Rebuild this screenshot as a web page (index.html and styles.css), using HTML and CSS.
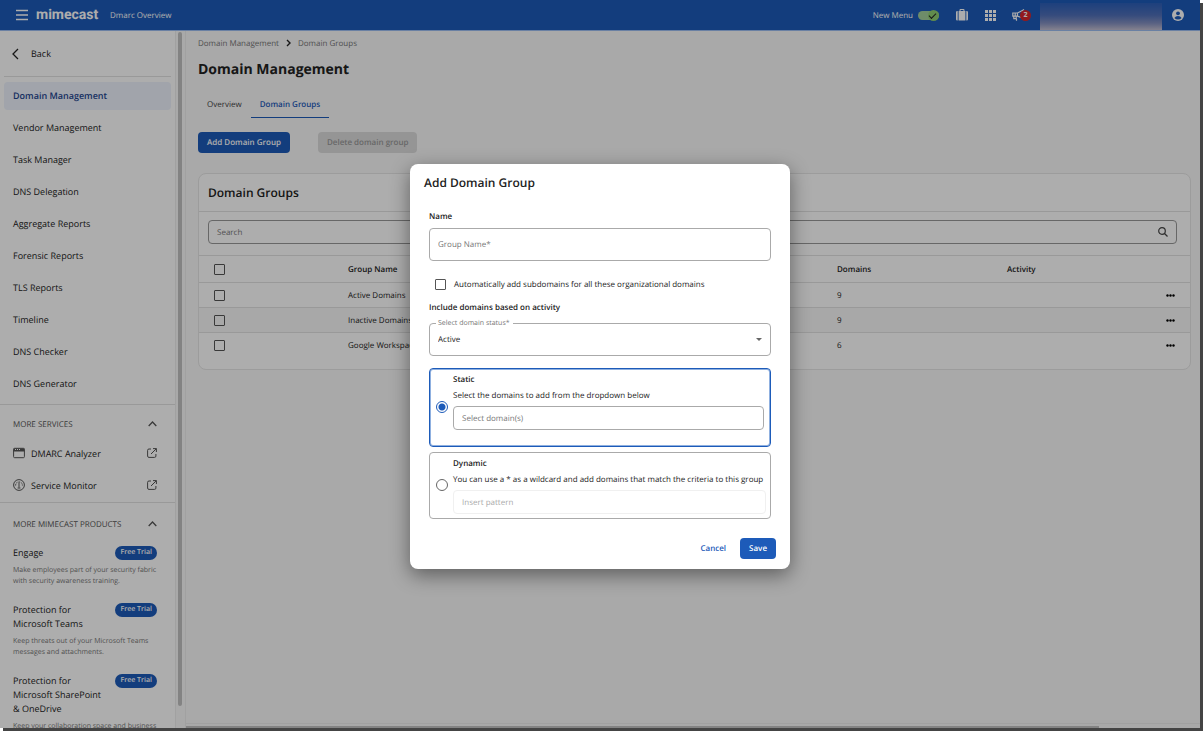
FILE: index.html
```html
<!DOCTYPE html>
<html lang="en">
<head>
    <meta charset="UTF-8">
    <meta name="viewport" content="width=device-width, initial-scale=1.0">
    <title>Domain Management - Dmarc Overview</title>
    <link rel="stylesheet" href="styles.css">
</head>
<body>

<div class="app">
    <header class="topbar">
        <button type="button" class="icon-btn menu-btn" aria-label="Menu">
            <svg width="12" height="12" viewBox="0 0 12 12" stroke="currentColor" stroke-width="1.7"><path d="M0 1.5h12M0 6h12M0 10.5h12"/></svg>
        </button>
        <span class="logo">mimecast</span>
        <span class="product">Dmarc Overview</span>

        <div class="topbar-right">
            <label class="new-menu">New Menu
                <input type="checkbox" class="switch" checked>
            </label>
            <button type="button" class="icon-btn" aria-label="Cases">
                <svg width="12" height="12" viewBox="0 0 12 12" fill="currentColor"><path d="M0 3.2Q0 2 1.300 2H1.700V11.500H1.300Q0 11.500 0 10.300zM2.600 2H3.500V1Q3.500 0 4.500 0h3Q8.500 0 8.500 1V2H9.400V11.500H2.600zM4.600 1.100V2h2.800V1.100zM10.300 2h.4Q12 2 12 3.200v7.100q0 1.200-1.300 1.200h-.4z"/></svg>
            </button>
            <button type="button" class="icon-btn apps" aria-label="Apps">
                <svg width="11" height="11" viewBox="0 0 11 11" fill="currentColor"><path d="M0 0h3v3H0zM4 0h3v3H4zM8 0h3v3H8zM0 4h3v3H0zM4 4h3v3H4zM8 4h3v3H8zM0 8h3v3H0zM4 8h3v3H4zM8 8h3v3H8z"/></svg>
            </button>
            <button type="button" class="icon-btn news" aria-label="News">
                <svg width="13" height="13" viewBox="0 0 13 13" fill="none" stroke="currentColor" stroke-width="1.200"><path d="M.8 4h4.700L10.500 1.500v7.500L5.500 7.200H.8zM5.500 4v3.200M3.200 4v3.200M1.800 7.200v2.500h2.400V7.200M4.500 9.700v2M10.500 1.500l1.500-1"/></svg>
                <span class="badge">2</span>
            </button>
            <span class="account"></span>
            <button type="button" class="icon-btn user" aria-label="User">
                <svg width="12" height="12" viewBox="0 0 12 12"><circle cx="6" cy="6" r="6" fill="currentColor"/><circle cx="6" cy="4.300" r="1.900" fill="#1d5bb9"/><path d="M2.400 9Q3.500 7 6 7t3.600 2Q8.200 10.600 6 10.600T2.400 9z" fill="#1d5bb9"/></svg>
            </button>
        </div>
    </header>

    <div class="body">
        <aside class="sidebar">
            <div class="sidebar-inner">
                <a href="#" class="back">
                    <svg width="7" height="12" viewBox="0 0 7 12" fill="none" stroke="currentColor" stroke-width="1.300"><path d="M6 1 1 6l5 5"/></svg>
                    Back
                </a>
                <nav class="nav">
                    <a href="#" class="active">Domain Management</a>
                    <a href="#">Vendor Management</a>
                    <a href="#">Task Manager</a>
                    <a href="#">DNS Delegation</a>
                    <a href="#">Aggregate Reports</a>
                    <a href="#">Forensic Reports</a>
                    <a href="#">TLS Reports</a>
                    <a href="#">Timeline</a>
                    <a href="#">DNS Checker</a>
                    <a href="#">DNS Generator</a>
                </nav>

                <section class="services">
                    <button type="button" class="section-title">MORE SERVICES
                        <svg width="9" height="6" viewBox="0 0 9 6" fill="none" stroke="currentColor" stroke-width="1.300"><path d="m.7 5 3.800-4 3.800 4"/></svg>
                    </button>
                    <a href="#" class="service">
                        <svg width="12" height="12" viewBox="0 0 12 12" fill="none" stroke="currentColor"><rect x=".6" y="1.300" width="10.800" height="9.400" rx="1"/><path d="M.6 3h10.800" stroke-width="3"/><path d="M2 2.500h1M4 2.500h1M6 2.500h1" stroke="#fff"/></svg>
                        <span>DMARC Analyzer</span>
                        <svg class="ext" width="10" height="10" viewBox="0 0 10 10" fill="none" stroke="currentColor"><path d="M4 1H2Q.6 1 .6 2.300v5.800q0 1.300 1.400 1.300h5.500q1.400 0 1.400-1.300V6M6 .6h3.400V4M9.300.7 4 6"/></svg>
                    </a>
                    <a href="#" class="service">
                        <svg width="12" height="12" viewBox="0 0 12 12" fill="none" stroke="currentColor"><circle cx="6" cy="6" r="5.400"/><path d="M6 3.500v5"/><path d="M2.600 6.500Q2.600 3 6 3t3.400 3.500" stroke-dasharray="1.500 1"/><path d="M4.600 9h2.800"/></svg>
                        <span>Service Monitor</span>
                        <svg class="ext" width="10" height="10" viewBox="0 0 10 10" fill="none" stroke="currentColor"><path d="M4 1H2Q.6 1 .6 2.300v5.800q0 1.300 1.400 1.300h5.500q1.400 0 1.400-1.300V6M6 .6h3.400V4M9.300.7 4 6"/></svg>
                    </a>
                </section>

                <section class="products">
                    <button type="button" class="section-title">MORE MIMECAST PRODUCTS
                        <svg width="9" height="6" viewBox="0 0 9 6" fill="none" stroke="currentColor" stroke-width="1.300"><path d="m.7 5 3.800-4 3.800 4"/></svg>
                    </button>
                    <article class="promo">
                        <div class="promo-head"><h3>Engage</h3><a href="#" class="trial">Free Trial</a></div>
                        <p>Make employees part of your security fabric with security awareness training.</p>
                    </article>
                    <article class="promo">
                        <div class="promo-head"><h3>Protection for Microsoft Teams</h3><a href="#" class="trial">Free Trial</a></div>
                        <p>Keep threats out of your Microsoft Teams messages and attachments.</p>
                    </article>
                    <article class="promo">
                        <div class="promo-head"><h3>Protection for Microsoft SharePoint &amp; OneDrive</h3><a href="#" class="trial">Free Trial</a></div>
                        <p>Keep your collaboration space and business</p>
                    </article>
                </section>
            </div>
            <div class="scroll-track"><div class="scroll-thumb"></div></div>
        </aside>

        <main class="content">
            <div class="page">
                <div class="crumbs">
                    <a href="#">Domain Management</a>
                    <svg width="5" height="8" viewBox="0 0 5 8" fill="none" stroke="#222" stroke-width="1.400"><path d="m1 1 3 3-3 3"/></svg>
                    <a href="#">Domain Groups</a>
                </div>
                <h1>Domain Management</h1>
                <div class="tabs">
                    <a href="#">Overview</a>
                    <a href="#" class="active">Domain Groups</a>
                </div>
                <div class="actions">
                    <button type="button" class="btn primary">Add Domain Group</button>
                    <button type="button" class="btn" disabled>Delete domain group</button>
                </div>

                <section class="card">
                    <h2>Domain Groups</h2>
                    <div class="search">
                        <input type="text" placeholder="Search" aria-label="Search">
                        <svg width="10" height="10" viewBox="0 0 10 10" fill="none" stroke="#444" stroke-width="1.200"><circle cx="4" cy="4" r="3.300"/><path d="m6.500 6.500 3 3"/></svg>
                    </div>
                    <table>
                        <thead>
                            <tr>
                                <th class="col-check"><input type="checkbox" class="check" aria-label="Select all"></th>
                                <th class="col-name">Group Name</th>
                                <th class="col-domains">Domains</th>
                                <th class="col-activity">Activity</th>
                                <th class="col-menu"></th>
                            </tr>
                        </thead>
                        <tbody>
                            <tr>
                                <td><input type="checkbox" class="check" aria-label="Active Domains"></td>
                                <td>Active Domains</td>
                                <td>9</td>
                                <td></td>
                                <td><button type="button" class="dots" aria-label="More"><svg width="9" height="3" viewBox="0 0 9 3"><circle cx="1.500" cy="1.500" r="1.200"/><circle cx="4.500" cy="1.500" r="1.200"/><circle cx="7.500" cy="1.500" r="1.200"/></svg></button></td>
                            </tr>
                            <tr class="alt">
                                <td><input type="checkbox" class="check" aria-label="Inactive Domains"></td>
                                <td>Inactive Domains</td>
                                <td>9</td>
                                <td></td>
                                <td><button type="button" class="dots" aria-label="More"><svg width="9" height="3" viewBox="0 0 9 3"><circle cx="1.500" cy="1.500" r="1.200"/><circle cx="4.500" cy="1.500" r="1.200"/><circle cx="7.500" cy="1.500" r="1.200"/></svg></button></td>
                            </tr>
                            <tr>
                                <td><input type="checkbox" class="check" aria-label="Google Workspace"></td>
                                <td>Google Workspace</td>
                                <td>6</td>
                                <td></td>
                                <td><button type="button" class="dots" aria-label="More"><svg width="9" height="3" viewBox="0 0 9 3"><circle cx="1.500" cy="1.500" r="1.200"/><circle cx="4.500" cy="1.500" r="1.200"/><circle cx="7.500" cy="1.500" r="1.200"/></svg></button></td>
                            </tr>
                        </tbody>
                    </table>
                </section>
            </div>
            <div class="hscroll"><div class="hscroll-thumb"></div></div>
        </main>
    </div>

    <div class="backdrop">
        <form class="modal" role="dialog" aria-labelledby="modal-title">
            <h2 id="modal-title">Add Domain Group</h2>
            <div class="modal-body">
                <h3>Name</h3>
                <input type="text" class="field" placeholder="Group Name*" aria-label="Group Name">
                <div class="check-row">
                    <input type="checkbox" class="check" id="auto-sub">
                    <label for="auto-sub">Automatically add subdomains for all these organizational domains</label>
                </div>
                <h3>Include domains based on activity</h3>
                <div class="select-wrap">
                    <label for="status">Select domain status*</label>
                    <select id="status" class="field">
                        <option>Active</option>
                        <option>Inactive</option>
                    </select>
                </div>

                <div class="option selected">
                    <input type="radio" class="radio" name="mode" id="static" checked>
                    <div class="option-text">
                        <label class="option-title" for="static">Static</label>
                        <label for="domains">Select the domains to add from the dropdown below</label>
                        <input type="text" id="domains" placeholder="Select domain(s)">
                    </div>
                </div>
                <div class="option">
                    <input type="radio" class="radio" name="mode" id="dynamic">
                    <div class="option-text">
                        <label class="option-title" for="dynamic">Dynamic</label>
                        <label for="pattern">You can use a * as a wildcard and add domains that match the criteria to this group</label>
                        <input type="text" id="pattern" placeholder="Insert pattern" disabled>
                    </div>
                </div>
            </div>
            <div class="modal-actions">
                <button type="button" class="btn text">Cancel</button>
                <button type="button" class="btn primary">Save</button>
            </div>
        </form>
    </div>
</div>

</body>
</html>
```
FILE: styles.css
```css
* {
    box-sizing: border-box;
}

body {
    margin: 0;
    height: 100vh;
    padding: 0 3px 3px 0;
    overflow: hidden;
    background: #fff;
    font-family: "Open Sans", "Liberation Sans", sans-serif;
    font-size: 8px;
    text-rendering: geometricPrecision;
    color: #222;
}

h1, h2, h3, p {
    margin: 0;
}

a {
    color: inherit;
    text-decoration: none;
}

button, input, select {
    font-family: inherit;
    font-size: inherit;
    text-rendering: inherit;
    color: inherit;
    margin: 0;
}

button {
    border: none;
    background: none;
    padding: 0;
    cursor: pointer;
}

svg {
    display: block;
    flex-shrink: 0;
}

.app {
    position: relative;
    height: 100%;
    display: flex;
    flex-direction: column;
    background: #f9f9f9;
    box-shadow: 3px 3px 0 #444;
}

/* top bar */
.topbar {
    display: flex;
    align-items: center;
    height: 31px;
    flex-shrink: 0;
    padding-left: 16px;
    background: #1d5bb9;
    border-bottom: 1px solid #9dbdf0;
    color: #fff;
}

.logo {
    margin-left: 8px;
    width: 74px;
    font-family: Roboto, sans-serif;
    font-size: 14px;
    font-weight: 700;
    line-height: 20px;
}

.product {
    font-weight: 500;
}

.topbar-right {
    display: flex;
    align-items: center;
    height: 100%;
    margin-left: auto;
    padding-right: 16px;
}

.icon-btn {
    color: #fff;
    margin-right: 17px;
}

.menu-btn {
    margin-right: 0;
}

.new-menu {
    display: flex;
    align-items: center;
    gap: 5px;
    margin-right: 17px;
    font-weight: 500;
}

.switch {
    appearance: none;
    position: relative;
    width: 21px;
    height: 9px;
    border-radius: 5px;
    background: #a3cf9b;
}

.switch::before {
    content: "";
    position: absolute;
    right: 0;
    top: -1px;
    width: 11px;
    height: 11px;
    border-radius: 50%;
    background: #8fce72;
}

.switch::after {
    content: "";
    position: absolute;
    right: 3px;
    top: 2px;
    width: 6px;
    height: 3px;
    border-left: 1px solid #222;
    border-bottom: 1px solid #222;
    transform: rotate(-45deg);
}

.apps {
    margin-right: 16px;
}

.news {
    position: relative;
    margin-right: 15px;
}

.badge {
    position: absolute;
    left: 8px;
    top: 1px;
    width: 11px;
    height: 11px;
    border-radius: 50%;
    background: #d8262c;
    font-size: 7px;
    font-weight: 700;
    line-height: 11px;
    text-align: center;
}

.account {
    align-self: flex-end;
    width: 122px;
    height: 27px;
    margin-right: 10px;
    background: linear-gradient(#2c5fb8, #4f6fb8 45%, #8490c0 75%, #c4bfd2);
}

.user {
    margin-right: 0;
}

/* sidebar */
.body {
    display: flex;
    flex: 1;
    min-height: 0;
}

.sidebar {
    display: flex;
    width: 186px;
    flex-shrink: 0;
    background: #fff;
}

.sidebar-inner {
    flex: 1;
    overflow: hidden;
}

.scroll-track {
    width: 11px;
    padding: 1px 3px 22px 2px;
    border-left: 1px solid #eee;
    border-right: 1px solid #eee;
    background: #fafafa;
}

.scroll-thumb {
    height: 100%;
    border-radius: 3px;
    background: #c1c1c1;
}

.back {
    display: flex;
    align-items: center;
    gap: 12px;
    height: 46px;
    margin: 0 4px;
    padding-left: 8px;
    border-bottom: 1px solid #e2e2e2;
    font-size: 9px;
}

.nav {
    display: flex;
    flex-direction: column;
    gap: 4px;
    padding: 5px 4px 6px;
    border-bottom: 1px solid #e2e2e2;
}

.nav a {
    height: 28px;
    padding-left: 9px;
    border-radius: 4px;
    font-size: 9px;
    line-height: 28px;
}

.nav .active {
    background: #edf2fc;
    color: #1f4690;
    font-weight: 600;
}

.section-title {
    display: flex;
    align-items: center;
    justify-content: space-between;
    width: 100%;
    height: 26px;
    color: #555;
    font-weight: 500;
}

.services {
    padding: 6px 18px 1px 13px;
    border-bottom: 1px solid #e2e2e2;
}

.service {
    display: flex;
    align-items: center;
    gap: 6px;
    height: 32px;
    font-size: 9px;
}

.service svg {
    color: #555;
}

.service .ext {
    margin-left: auto;
}

.products {
    padding: 8px 18px 0 13px;
}

.promo {
    margin: 9px 0 16px;
}

.promo-head {
    display: flex;
    align-items: flex-start;
    justify-content: space-between;
    margin-bottom: 5px;
}

.promo h3 {
    width: 96px;
    font-size: 9px;
    font-weight: 400;
    line-height: 14px;
}

.promo p {
    color: #777;
    font-size: 7px;
    line-height: 11px;
}

.trial {
    padding: 0 5px;
    border-radius: 7px;
    background: #1d5bb9;
    color: #fff;
    font-size: 7px;
    font-weight: 600;
    line-height: 14px;
    white-space: nowrap;
}

/* page */
.content {
    display: flex;
    flex-direction: column;
    flex: 1;
    min-width: 0;
}

.page {
    flex: 1;
    padding: 5px 9px 0 12px;
}

.crumbs {
    display: flex;
    align-items: center;
    gap: 7px;
    height: 14px;
    color: #777;
}

h1 {
    margin-top: 10px;
    font-size: 14px;
    font-weight: 700;
    line-height: 20px;
}

.tabs {
    display: flex;
    margin-top: 11px;
}

.tabs a {
    height: 27px;
    padding: 0 9px;
    line-height: 27px;
    color: #444;
    font-weight: 500;
}

.tabs .active {
    border-bottom: 1px solid #1d5bb9;
    color: #1d5bb9;
    font-weight: 600;
}

.actions {
    display: flex;
    gap: 28px;
    margin-top: 14px;
}

.btn {
    height: 21px;
    padding: 0 9px;
    border-radius: 4px;
    font-weight: 600;
}

.btn.primary {
    background: #1d5bb9;
    color: #fff;
}

.btn.text {
    color: #1d5bb9;
}

.btn:disabled {
    background: #dcdcdc;
    color: #999;
}

.card {
    margin-top: 20px;
    padding-bottom: 11px;
    border: 1px solid #e6e6e6;
    border-radius: 8px;
    background: #fff;
}

.card h2 {
    padding-left: 9px;
    border-bottom: 1px solid #e2e2e2;
    font-size: 12px;
    font-weight: 600;
    line-height: 37px;
}

.search {
    display: flex;
    align-items: center;
    height: 24px;
    margin: 8px 13px 11px 9px;
    padding: 0 8px;
    border: 1px solid #999;
    border-radius: 4px;
}

.search input {
    flex: 1;
    border: none;
    background: none;
    outline: none;
    padding: 0;
}

::placeholder {
    color: #777;
    opacity: 1;
}

table {
    width: 100%;
    table-layout: fixed;
    border-collapse: collapse;
}

th, td {
    height: 25px;
    padding: 0;
    border-top: 1px solid #e2e2e2;
    text-align: left;
}

th {
    height: 27px;
    font-weight: 600;
}

.alt {
    background: #f8f8f8;
}

.col-check {
    width: 149px;
}

.col-domains {
    width: 170px;
}

.col-activity {
    width: 159px;
}

.col-menu {
    width: 24px;
}

.check {
    appearance: none;
    display: block;
    width: 11px;
    height: 11px;
    border: 1px solid #555;
    border-radius: 1px;
}

table .check {
    margin-left: 15px;
}

.dots {
    display: block;
}

.hscroll {
    height: 5px;
    padding-top: 2px;
    border-top: 1px solid #eee;
}

.hscroll-thumb {
    width: 90%;
    height: 2px;
    background: #c1c1c1;
}

/* dialog */
.backdrop {
    position: absolute;
    inset: 0;
    display: flex;
    align-items: center;
    justify-content: center;
    padding-top: 5px;
    background: rgba(0, 0, 0, 0.32);
}

.modal {
    width: 380px;
    padding: 9px 14px 10px;
    border-radius: 8px;
    background: #fff;
    box-shadow: 0 6px 20px rgba(0, 0, 0, 0.45);
}

.modal h2 {
    font-size: 12px;
    font-weight: 600;
    line-height: 20px;
}

.modal-body {
    padding: 17px 5px 0;
}

.modal-body h3 {
    font-size: 8px;
    font-weight: 600;
    line-height: 14px;
}

.field {
    display: block;
    width: 100%;
    height: 33px;
    padding: 0 8px;
    border: 1px solid #aaa;
    border-radius: 4px;
    background: #fff;
}

input.field {
    margin-top: 4px;
}

.check-row {
    display: flex;
    align-items: center;
    gap: 8px;
    height: 14px;
    margin: 16px 0 10px 6px;
}

.select-wrap {
    position: relative;
    margin: 8px 0 12px;
}

.select-wrap label {
    position: absolute;
    left: 7px;
    top: -4px;
    padding: 0 3px 0 2px;
    background: #fff;
    color: #777;
    font-size: 7px;
    line-height: 10px;
}

select.field {
    appearance: none;
}

.select-wrap::after {
    content: "";
    position: absolute;
    right: 9px;
    top: 15px;
    border: 3px solid transparent;
    border-top-color: #666;
    border-bottom: none;
}

.option {
    display: flex;
    align-items: center;
    gap: 5px;
    margin-bottom: 5px;
    padding: 3px 4px 4px 6px;
    border: 1px solid #aaa;
    border-radius: 4px;
}

.option.selected {
    padding-right: 6px;
    border-color: #1d5bb9;
    box-shadow: inset 0 0 0 1px #8fb0e0;
}

.option-text {
    display: flex;
    flex-direction: column;
    flex: 1;
    min-width: 0;
}

.selected .option-text {
    padding-bottom: 12px;
}

.option-text label {
    line-height: 16px;
    white-space: nowrap;
}

.option-text .option-title {
    font-weight: 600;
}

.option-text input {
    width: 100%;
    height: 24px;
    margin-top: 2px;
    padding: 0 8px;
    border: 1px solid #aaa;
    border-radius: 4px;
    background: #fff;
}

.option-text input:disabled {
    border-color: #f0f0f0;
}

.option-text input:disabled::placeholder {
    color: #aaa;
}

.radio {
    appearance: none;
    flex-shrink: 0;
    width: 12px;
    height: 12px;
    border: 1px solid #666;
    border-radius: 50%;
}

.radio:checked {
    border-color: #1d5bb9;
    background: radial-gradient(circle, #1d5bb9 3px, #fff 4px);
}

.modal-actions {
    display: flex;
    justify-content: flex-end;
    gap: 5px;
    margin-top: 19px;
}
```
